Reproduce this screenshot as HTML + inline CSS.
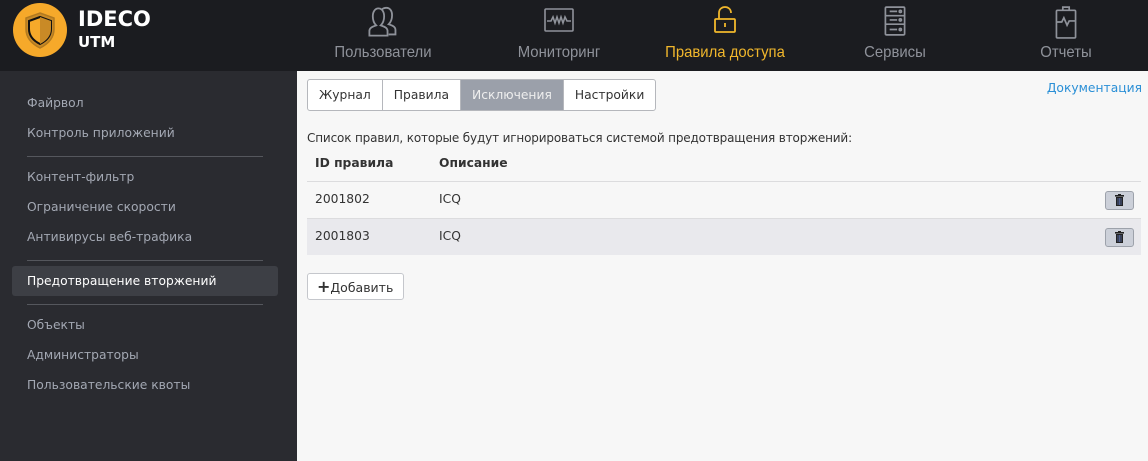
<!DOCTYPE html>
<html><head><meta charset="utf-8"><style>
*{margin:0;padding:0;box-sizing:border-box}
body{width:1148px;height:461px;overflow:hidden;background:#f7f7f7;font-family:"DejaVu Sans","Liberation Sans",sans-serif;position:relative}
.hdr{position:absolute;left:0;top:0;width:1148px;height:71px;background:#1b1c20}
.logo{position:absolute;left:13px;top:3px;width:54px;height:54px;border-radius:50%;background:#f6a92a}
.brand{position:absolute;left:78px;top:7px;color:#fff;font-weight:bold;font-size:21px;line-height:24px}
.brand small{display:block;font-size:15px;line-height:20px;margin-top:1px}
.nav{position:absolute;top:0;width:170px;text-align:center;color:#8f929a;font-size:14px}
.nav svg{position:absolute;top:5px}
.nav span{position:absolute;top:44px;left:0;width:100%;font-family:"Liberation Sans","DejaVu Sans",sans-serif;font-size:16px;transform:scaleX(.93)}
.side{position:absolute;left:0;top:71px;width:297px;height:390px;background:#2a2b30}
.si{position:absolute;left:27px;font-size:12.3px;color:#a3a8b3}
.sep{position:absolute;left:27px;width:236px;height:1px;background:#55575d}
.act{position:absolute;left:12px;width:266px;height:30px;background:#3d3f45;border-radius:3px}
.tabs{position:absolute;left:307px;top:79px;height:32px;border:1px solid #b5b7bc;border-radius:3px;display:flex;overflow:hidden;background:#fff}
.tabs div{padding:0 11px;line-height:30px;font-size:12.3px;color:#333;border-right:1px solid #b5b7bc}
.tabs div:last-child{border:none}
.tabs .on{background:#9ba0aa;color:#eee}
.t{position:absolute;font-size:12.3px;color:#333}
.b{font-weight:bold}
.row{position:absolute;left:307px;width:834px;height:37px;border-top:1px solid #dcdcde}
.del{position:absolute;left:1105px;width:29px;height:19px;background:#ccd0d9;border:1px solid #9da2ab;border-radius:3px}
.add{position:absolute;left:307px;top:273px;width:97px;height:27px;background:#fff;border:1px solid #c5c7cc;border-radius:3px;font-size:12.5px;color:#333;line-height:25px;padding-left:9px;white-space:nowrap}
</style></head><body>
<div class="hdr">
<div class="logo"><svg width="54" height="54" viewBox="0 0 54 54"><path d="M27 10 L41 15 V26 C41 35 35 41 27 45 C19 41 13 35 13 26 V15 Z" fill="#c98a26" stroke="#b27a20" stroke-width="1.5"/><path d="M27 14 L38 18 V26 C38 33 33 38 27 41 C21 38 16 33 16 26 V18 Z" fill="#f6a92a" stroke="#111" stroke-width="2"/><path d="M27 14 L38 18 V26 C38 33 33 38 27 41 Z" fill="#c98a26"/></svg></div>
<div class="brand">IDECO<small>UTM</small></div>
<div class="nav" style="left:298px"><svg style="left:68px" width="34" height="34" viewBox="0 0 30 30" fill="none" stroke="#8f929a" stroke-width="1.6"><path d="M3 27 V23 C3 20 6 19 9 18 C7 16 6 13 6 10 C6 6 8 3 11 3 C14 3 16 6 16 10 C16 13 15 16 13 18 C16 19 19 20 19 23 V27 Z"/><path d="M14 4 C15 3 16 2.5 18 2.5 C21 2.5 23 5 23 9 C23 12 22 15 20 17 C23 18 26 19 26 22 V26 H20"/></svg><span>Пользователи</span></div>
<div class="nav" style="left:474px"><svg style="left:68px" width="34" height="30" viewBox="0 0 32 30" fill="none" stroke="#8f929a" stroke-width="1.6"><rect x="2" y="4" width="28" height="22" rx="1"/><path d="M4 16 L8 16 L10 12 L12 18 L14 12 L16 18 L18 12 L20 18 L22 12 L24 16 L28 16"/></svg><span>Мониторинг</span></div>
<div class="nav" style="left:640px;color:#f1b72c"><svg style="left:72px" width="26" height="30" viewBox="0 0 26 30" fill="none" stroke="#f1b72c" stroke-width="1.8"><rect x="3" y="14" width="20" height="13" rx="1"/><path d="M7 14 V8 C7 4 10 2 13 2 C16 2 19 4 19 8"/><path d="M13 18 V22"/></svg><span>Правила доступа</span></div>
<div class="nav" style="left:810px"><svg style="left:72px" width="26" height="32" viewBox="0 0 24 30" fill="none" stroke="#8f929a" stroke-width="1.6"><rect x="3" y="2" width="18" height="26" rx="1"/><path d="M3 10 H21 M3 18 H21 M7 6 H14 M7 14 H14 M7 23 H14"/><circle cx="17" cy="6" r="1"/><circle cx="17" cy="14" r="1"/><circle cx="17" cy="23" r="1"/></svg><span>Сервисы</span></div>
<div class="nav" style="left:981px"><svg style="left:72px" width="26" height="34" viewBox="0 0 24 32" fill="none" stroke="#8f929a" stroke-width="1.6"><rect x="3" y="5" width="18" height="26" rx="1"/><path d="M9 5 V2 H15 V5"/><path d="M3 16 H8 L10 12 L13 19 L15 15 H21"/></svg><span>Отчеты</span></div>
</div>
<div class="side">
<div class="si" style="top:25px">Файрвол</div>
<div class="si" style="top:55px">Контроль приложений</div>
<div class="sep" style="top:85px"></div>
<div class="si" style="top:99px">Контент-фильтр</div>
<div class="si" style="top:129px">Ограничение скорости</div>
<div class="si" style="top:159px">Антивирусы веб-трафика</div>
<div class="sep" style="top:189px"></div>
<div class="act" style="top:195px"></div>
<div class="si" style="top:203px;color:#fff">Предотвращение вторжений</div>
<div class="sep" style="top:233px"></div>
<div class="si" style="top:247px">Объекты</div>
<div class="si" style="top:277px">Администраторы</div>
<div class="si" style="top:307px">Пользовательские квоты</div>
</div>
<div class="tabs"><div>Журнал</div><div>Правила</div><div class="on">Исключения</div><div>Настройки</div></div>
<div class="t" style="right:6px;top:81px;color:#2a8fd6">Документация</div>
<div class="t" style="left:307px;top:131px;font-size:12px;letter-spacing:-.15px">Список правил, которые будут игнорироваться системой предотвращения вторжений:</div>
<div class="t b" style="left:315px;top:156px">ID правила</div>
<div class="t b" style="left:439px;top:156px">Описание</div>
<div class="row" style="top:181px"></div>
<div class="row" style="top:218px;background:#e9e9ed"></div>
<div class="t" style="left:315px;top:192px">2001802</div><div class="t" style="left:439px;top:192px">ICQ</div>
<div class="t" style="left:315px;top:229px">2001803</div><div class="t" style="left:439px;top:229px">ICQ</div>
<div class="del" style="top:191px"><svg width="27" height="17" viewBox="0 0 27 17"><rect x="9" y="3" width="9" height="1.6" fill="#222"/><rect x="12" y="2" width="3" height="1.5" fill="#222"/><rect x="10" y="5" width="7" height="9" fill="#222"/><path d="M12 6 V13 M13.5 6 V13 M15 6 V13" stroke="#5a6ea8" stroke-width=".8"/></svg></div>
<div class="del" style="top:228px"><svg width="27" height="17" viewBox="0 0 27 17"><rect x="9" y="3" width="9" height="1.6" fill="#222"/><rect x="12" y="2" width="3" height="1.5" fill="#222"/><rect x="10" y="5" width="7" height="9" fill="#222"/><path d="M12 6 V13 M13.5 6 V13 M15 6 V13" stroke="#5a6ea8" stroke-width=".8"/></svg></div>
<div class="add"><b style="font-size:16px">+</b>Добавить</div>
</body></html>
